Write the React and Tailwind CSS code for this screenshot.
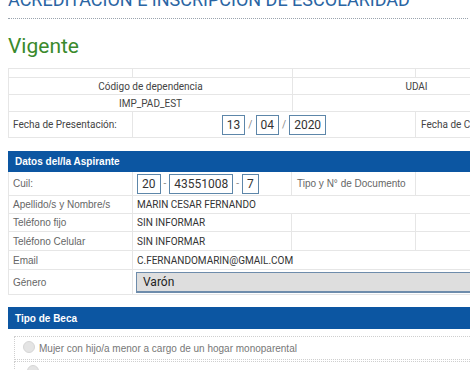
export default function App() {
  const cell = "border-r border-b border-[#e6e6e6]";
  const lab = "text-[10px] text-[#666] font-['Liberation_Sans',Arial,sans-serif]";
  const val = "text-[10px] text-[#333] font-['Roboto',sans-serif]";
  const box = "h-[20px] border-[1.5px] border-[#5d86a9] bg-white flex items-center px-[4px] text-[12px] text-[#333] font-['Roboto',sans-serif]";
  return (
    <div className="w-[470px] h-[370px] overflow-hidden bg-white font-['Roboto',sans-serif]">
      <div className="ml-2 w-[540px] -mt-[12px]">
        <div className="w-[460px] border-b border-dotted border-[#9aa4ae] pb-[6px]">
          <h1 className="text-[18px] leading-[24px] text-[#2a65a3] whitespace-nowrap">ACREDITACIÓN E INSCRIPCIÓN DE ESCOLARIDAD</h1>
        </div>
        <div className="text-[21px] leading-[28px] text-[#3a8a2c] mt-[13px]">Vigente</div>
        {/* top table */}
        <div className="mt-[8px] border-l border-t border-[#e6e6e6]">
          <div className="grid grid-cols-[124px_160px_123px_133px] h-[9px]">
            <div className={cell}></div><div className={cell}></div><div className={cell}></div><div className={cell}></div>
          </div>
          <div className="grid grid-cols-[284px_256px] h-[17px]">
            <div className={`${cell} flex items-center justify-center text-[10px] text-[#444]`}>Código de dependencia</div>
            <div className={`${cell} flex items-center justify-center text-[10px] text-[#444] pr-[8px]`}>UDAI</div>
          </div>
          <div className="grid grid-cols-[284px_256px] h-[17px]">
            <div className={`${cell} flex items-center justify-center text-[10px] text-[#444]`}>IMP_PAD_EST</div>
            <div className={cell}></div>
          </div>
          <div className="grid grid-cols-[124px_283px_133px] h-[26px]">
            <div className={`${cell} flex items-center pl-[4px] text-[10px] text-[#444]`}>Fecha de Presentación:</div>
            <div className={`${cell} flex items-center justify-center gap-[3px] text-[10px] text-[#888]`}>
              <div className={`${box} h-[19px]`}>13</div>/<div className={`${box} h-[19px]`}>04</div>/<div className={`${box} h-[19px]`}>2020</div>
            </div>
            <div className={`${cell} flex items-center pl-[5px] text-[10px] text-[#444] whitespace-nowrap`}>Fecha de Carga</div>
          </div>
        </div>
        {/* Datos del aspirante */}
        <div className="mt-[13px] h-[21px] bg-[#0c56a2] flex items-center pl-[7px] text-[10px] font-bold text-white font-['Liberation_Sans',Arial,sans-serif]">Datos del/la Aspirante</div>
        <div className="border-l border-[#e6e6e6]">
          <div className="grid grid-cols-[124px_159px_124px_133px] h-[24px]">
            <div className={`${cell} ${lab} flex items-center pl-[4px]`}>Cuil:</div>
            <div className={`${cell} flex items-center pl-[4px] gap-[3px] text-[10px] text-[#888]`}>
              <div className={box}>20</div>-<div className={box}>43551008</div>-<div className={box}>7</div>
            </div>
            <div className={`${cell} ${lab} flex items-center pl-[5px] whitespace-nowrap`}>Tipo y N° de Documento</div>
            <div className={cell}></div>
          </div>
          <div className="grid grid-cols-[124px_416px] h-[18px]">
            <div className={`${cell} ${lab} flex items-center pl-[4px]`}>Apellido/s y Nombre/s</div>
            <div className={`${cell} ${val} flex items-center pl-[4px]`}>MARIN CESAR FERNANDO</div>
          </div>
          <div className="grid grid-cols-[124px_159px_124px_133px] h-[18px]">
            <div className={`${cell} ${lab} flex items-center pl-[4px]`}>Teléfono fijo</div>
            <div className={`${cell} ${val} flex items-center pl-[4px]`}>SIN INFORMAR</div>
            <div className={cell}></div><div className={cell}></div>
          </div>
          <div className="grid grid-cols-[124px_159px_124px_133px] h-[19px]">
            <div className={`${cell} ${lab} flex items-center pl-[4px]`}>Teléfono Celular</div>
            <div className={`${cell} ${val} flex items-center pl-[4px]`}>SIN INFORMAR</div>
            <div className={cell}></div><div className={cell}></div>
          </div>
          <div className="grid grid-cols-[124px_416px] h-[19px]">
            <div className={`${cell} ${lab} flex items-center pl-[4px]`}>Email</div>
            <div className={`${cell} ${val} flex items-center pl-[4px]`}>C.FERNANDOMARIN@GMAIL.COM</div>
          </div>
          <div className="grid grid-cols-[124px_416px] h-[25px]">
            <div className={`${cell} ${lab} flex items-center pl-[4px]`}>Género</div>
            <div className={`${cell} flex items-center pl-[3px]`}>
              <div className="w-full h-[21px] bg-[#dedede] border border-[#6e8cab] border-b-2 flex items-center pl-[6px] text-[12px] text-[#222]">Varón</div>
            </div>
          </div>
        </div>
        {/* Tipo de beca */}
        <div className="mt-[12px] h-[22px] bg-[#0c56a2] flex items-center pl-[7px] text-[10px] font-bold text-white font-['Liberation_Sans',Arial,sans-serif]">Tipo de Beca</div>
        <div className="ml-[6px] mt-[7px] flex flex-col gap-[1px]">
          <div className="h-[24px] border border-dotted border-[#cfcfcf] flex items-center pl-[8px] gap-[4px]">
            <div className="w-[12px] h-[12px] rounded-full bg-[#e4e4e4] border border-[#d6d6d6] -mt-[3px]"></div>
            <span className="text-[10px] text-[#777] font-['Liberation_Sans',Arial,sans-serif]">Mujer con hijo/a menor a cargo de un hogar monoparental</span>
          </div>
          <div className="h-[24px] border border-dotted border-[#cfcfcf] flex items-start pt-[3px] pl-[12px]">
            <div className="w-[12px] h-[12px] rounded-full bg-[#e4e4e4] border border-[#d6d6d6]"></div>
          </div>
        </div>
      </div>
    </div>
  );
}
